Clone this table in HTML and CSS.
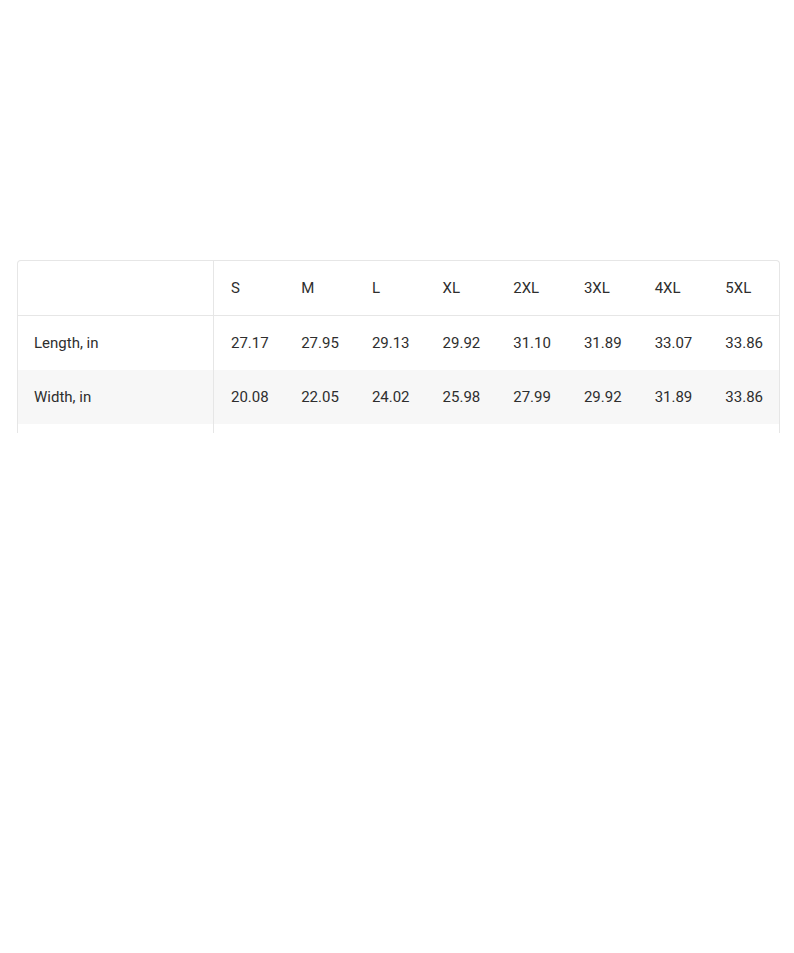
FILE: index.html
```html
<!DOCTYPE html>
<html>
<head>
<meta charset="utf-8">
<link rel="stylesheet" href="styles.css">
</head>
<body>
<div class="page">
  <div class="table-wrap">
    <table class="size-table">
      <thead>
        <tr><th class="label"></th><th>S</th><th>M</th><th>L</th><th>XL</th><th>2XL</th><th>3XL</th><th>4XL</th><th>5XL</th></tr>
      </thead>
      <tbody>
        <tr><td class="label">Length, in</td><td>27.17</td><td>27.95</td><td>29.13</td><td>29.92</td><td>31.10</td><td>31.89</td><td>33.07</td><td>33.86</td></tr>
        <tr class="alt"><td class="label">Width, in</td><td>20.08</td><td>22.05</td><td>24.02</td><td>25.98</td><td>27.99</td><td>29.92</td><td>31.89</td><td>33.86</td></tr>
        <tr><td class="label"></td><td></td><td></td><td></td><td></td><td></td><td></td><td></td><td></td></tr>
      </tbody>
    </table>
  </div>
</div>
</body>
</html>
```
FILE: styles.css
```css
html, body {
  margin: 0;
  padding: 0;
  background: #ffffff;
}
.page {
  padding: 260px 14px 0 17px;
  font-family: Roboto, "Liberation Sans", Arial, sans-serif;
  color: #2e2e2e;
}
.table-wrap {
  width: 763px;
  height: 173px;
  overflow: hidden;
  border: 1px solid #e6e6e6;
  border-bottom: none;
  border-radius: 4px 4px 0 0;
  box-sizing: border-box;
}
.size-table {
  width: 100%;
  border-collapse: collapse;
  table-layout: fixed;
  font-size: 15px;
}
.size-table th,
.size-table td {
  text-align: left;
  font-weight: 400;
  padding: 0 0 0 17px;
  height: 54px;
  white-space: nowrap;
}
.size-table th.label,
.size-table td.label {
  width: 179px;
  border-right: 1px solid #e6e6e6;
  padding-left: 16px;
}
.size-table thead tr {
  border-bottom: 1px solid #e6e6e6;
}
.size-table tr.alt {
  background: #f7f7f7;
}
```
